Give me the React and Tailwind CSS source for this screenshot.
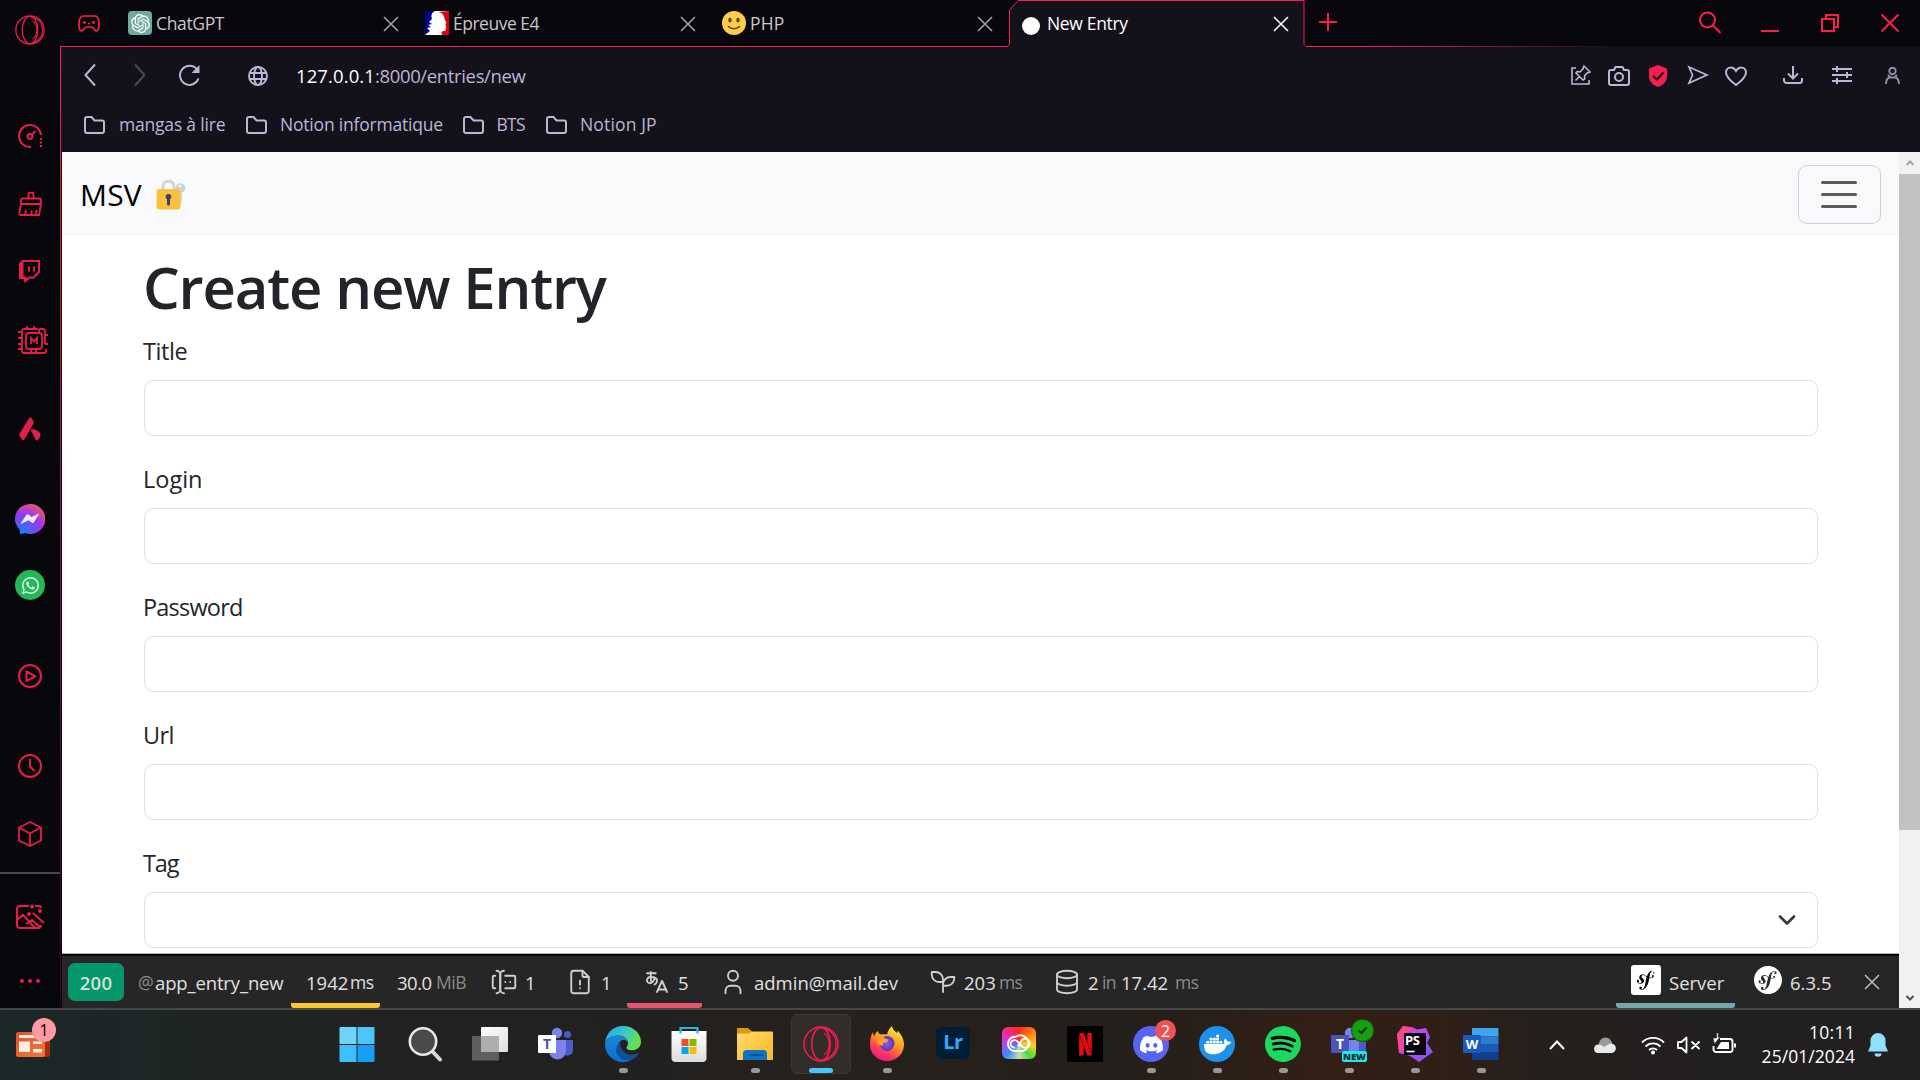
import React from "react";
import {
  SiSymfony, SiOpenai, SiNetflix, SiDiscord, SiDocker, SiSpotify, SiWhatsapp,
} from "react-icons/si";
import { TbForms, TbFileAlert, TbLanguageHiragana, TbUser, TbDatabase } from "react-icons/tb";

/* ---------- shared ---------- */

function Svg({ w, h, vb, className = "", sw = 2, children }) {
  return (
    <svg width={w} height={h} viewBox={vb || `0 0 ${w} ${h}`} fill="none" stroke="currentColor" strokeWidth={sw} className={`block shrink-0 overflow-visible ${className}`}>
      {children}
    </svg>
  );
}

const Close = ({ className = "" }) => (
  <Svg w={16} h={16} sw={1.5} className={className}><path d="M1 1l14 14M15 1L1 15" /></Svg>
);

const OperaRings = ({ size }) => (
  <Svg w={size} h={size} vb="0 0 36 36" sw={1.6}>
    <circle cx="18" cy="18" r="17" />
    <ellipse cx="18" cy="18" rx="9.3" ry="16.4" />
    <path d="M19 2C28 4 33 10 33 18s-5 14-14 16M21 7c7 5 7 17 0 22" strokeWidth="1.3" />
  </Svg>
);

/* ---------- left sidebar ---------- */

function Sidebar() {
  return (
    <aside className="flex w-[60px] shrink-0 flex-col items-center bg-[#08070c] text-[#e51d4b]">
      <div className="mt-[15px]"><OperaRings size={30} /></div>
      <div className="mt-[79px]">
        <Svg w={24} h={24}>
          <path d="M13 23A11 11 0 1 1 23 11" />
          <circle cx="12" cy="12.5" r="2.4" /><path d="M13.8 10.8L17.5 7" />
          <path d="M23 14v9" strokeDasharray="2 1.5" />
        </Svg>
      </div>
      <div className="mt-[44px]">
        <Svg w={24} h={24} sw={1.8}>
          <path d="M10.5 6V1.5a.7.7 0 0 1 .7-.7h3.6a.7.7 0 0 1 .7.7V6M4 6.5h17.5a1.5 1.5 0 0 1 1.5 1.5v4H3V8a1.5 1.5 0 0 1 1-1.5zM3 12L1.2 21.5a1.2 1.2 0 0 0 1.2 1.5H21l2-11M7 23l1-5M13.5 23v-4.5M18 23l.5-5" />
        </Svg>
      </div>
      <div className="mt-[44px]">
        <Svg w={22} h={22}>
          <path d="M3.5 1H20v11l-5.500 5.500h-4L6.500 21v-3.500h-3z" />
          <path d="M0 3l4-2.500V18h3v3.500H5V19H0z" fill="currentColor" stroke="none" />
          <path d="M10 6.500v5M15 6.500v5" />
        </Svg>
      </div>
      <div className="mt-[43px] pl-[5px]">
        <Svg w={30} h={30} sw={1.8}>
          <path d="M20 4H6a2 2 0 0 0-2 2v20a2 2 0 0 0 2 2h20a2 2 0 0 0 2-2v-2M21 4h4a2 2 0 0 1 2 2v13" />
          <rect x="8" y="8" width="16" height="16" rx="3" />
          <path d="M9 1v3M16 1v3M0 7h4M0 13h4M0 19h4M0 24h4M27 10h3M27 19h3M13 24v4M18 24v4M21 4v4" />
          <path d="M13 19v-6l3 3.500 3-3.500v6" />
        </Svg>
      </div>
      <div className="mt-[62px]">
        <svg width="22" height="24" viewBox="0 0 22 24" fill="currentColor" className="block">
          <path d="M10 1.500c.6-1.200 2-1.200 2.700-.2l1.800 3c.5.8.4 1.500 0 2.200L5.500 22.300c-.7 1.200-2 1.200-2.700 0L.6 19c-.5-.8-.4-1.500 0-2.200z" />
          <path d="M11.500 12.500c4-1.200 10 1.500 10 5.800 0 2-1.500 3.200-2.700 4.600-.7.8-1.600.7-2.200-.2z" />
        </svg>
      </div>
      <div className="mt-[63px]">
        <svg width="30" height="30" viewBox="0 0 30 30" className="block">
          <defs><radialGradient id="msg" cx=".2" cy="1" r="1.15"><stop offset="0" stopColor="#1184f5" /><stop offset=".6" stopColor="#9a36f0" /><stop offset=".95" stopColor="#f0566c" /></radialGradient></defs>
          <path d="M15 0a15 15 0 1 1-5 29L6 30c-.8.200-1-.1-1-.8L4.800 26A15 15 0 0 1 15 0z" fill="url(#msg)" />
          <path d="M6 19l5.200-8c.6-.8 1.500-.9 2.200-.4l3 2.400 7-3.200c.5-.1.800.3.5.8l-5 7.600c-.6.8-1.500.9-2.200.4l-3.200-2.400-6.600 3.400c-.7.3-1.200-.1-.9-.6z" fill="#eeeaf2" />
        </svg>
      </div>
      <div className="mt-[36px] flex h-[30px] w-[30px] items-center justify-center rounded-full bg-[#22b858]">
        <SiWhatsapp className="h-[17px] w-[17px] text-[#f0f5f0]" />
      </div>
      <div className="mt-[64px]">
        <Svg w={24} h={24}><circle cx="12" cy="12" r="11" /><path d="M8.500 7.500v9.400l9-4.600z" strokeLinejoin="round" /></Svg>
      </div>
      <div className="mt-[66px]">
        <Svg w={24} h={24}><circle cx="12" cy="12" r="11" /><path d="M12 5v7.500l4.500 4.500" /></Svg>
      </div>
      <div className="mt-[43px]">
        <Svg w={24} h={26} sw={1.8}><path d="M12 1l11 5.500v13L12 25 1 19.500v-13zM1 6.500L12 12.500l11-6M12 12.500V25" strokeLinejoin="round" /></Svg>
      </div>
      <div className="mt-[25px] h-[2px] w-[60px] bg-[#4a4a4d]" />
      <div className="mt-[30px]">
        <Svg w={28} h={26}>
          <path d="M13 2H4a3 3 0 0 0-3 3v16a3 3 0 0 0 3 3h18a3 3 0 0 0 3-3M19 2h4a2 2 0 0 1 2 2M1 16l6-5 12 13M10 20l6-4 8 7M17 9l11 10" />
          <g fill="currentColor" stroke="none"><circle cx="16" cy="2.500" r="2" /><circle cx="24" cy="7" r="2" /><circle cx="13" cy="10" r="2" /></g>
        </Svg>
      </div>
      <div className="mt-[49px] flex gap-1">
        <i className="h-1 w-1 rounded-full bg-current" /><i className="h-1 w-1 rounded-full bg-current" /><i className="h-1 w-1 rounded-full bg-current" />
      </div>
    </aside>
  );
}

/* ---------- tab strip ---------- */

const Marianne = () => (
  <svg width="24" height="24" viewBox="0 0 24 24" className="block">
    <path d="M0 0h24v24H0z" fill="#fff" />
    <path d="M0 0h10C6 2 6 5 7 8l-3 3 3 2-4 1 3 2-4 1 3 3-5 4z" fill="#000091" />
    <path d="M24 0v24h-7c-1-3 0-4 2-4s2-2 1.500-3l1-1-1-1 .500-1-1-1 1.500-1-2-4c0-3-2-6-6-7z" fill="#e1000f" />
  </svg>
);
const Smiley = () => (
  <svg width="24" height="24" viewBox="0 0 24 24" className="block">
    <circle cx="12" cy="12" r="12" fill="#ffcc4d" />
    <ellipse cx="8" cy="9" rx="1.700" ry="2.500" fill="#664500" /><ellipse cx="16" cy="9" rx="1.700" ry="2.500" fill="#664500" />
    <path d="M6.500 15.500c3 3 8 3 11 0" stroke="#664500" strokeWidth="1.500" fill="none" strokeLinecap="round" />
  </svg>
);

function Tab({ icon, label, active }) {
  return (
    <div className="flex h-[46px] w-[297px] shrink-0 items-center">
      <div className="w-6 shrink-0">{icon}</div>
      <div className={`ml-[4px] whitespace-nowrap text-[17.5px] leading-[46px] ${active ? "w-[226px] text-white" : "w-[227px] text-[#c9c7cb]"}`}>{label}</div>
      <Close className={active ? "mt-[2px] text-white" : "mt-[2px] text-[#a9a7ab]"} />
    </div>
  );
}

function TabStrip() {
  return (
    <div className="flex h-[46px] bg-[#08070c] pl-[18px] text-[#fa1e4e]">
      <div className="flex h-[46px] w-[50px] shrink-0 items-center">
        <Svg w={22} h={17} sw={1.7}>
          <path d="M5 1h12c3 0 4 4 4 8 0 4-.5 7-2.500 7-2 0-2.500-4-5-4h-5c-2.500 0-3 4-5 4S1 13 1 9c0-4 1-8 4-8z" />
          <g fill="currentColor" stroke="none"><circle cx="6.500" cy="7.500" r="1.400" /><circle cx="15.500" cy="7.500" r="1.400" /><circle cx="11" cy="8.500" r="1" /></g>
        </Svg>
      </div>
      <Tab
        icon={<div className="flex h-6 w-6 items-center justify-center rounded-[4px] bg-[#74aa9c]"><SiOpenai className="h-[19px] w-[19px] text-white" /></div>}
        label={<span className="tracking-[-0.35px]">ChatGPT</span>}
      />
      <Tab icon={<Marianne />} label={<span className="tracking-[-0.5px]">Épreuve E4</span>} />
      <Tab icon={<Smiley />} label={<span className="tracking-[0.1px]">PHP</span>} />
      <div className="relative z-10 flex w-[300px] shrink-0">
        <Tab active icon={<div className="ml-[3px] mt-[6px] h-[18px] w-[18px] rounded-full bg-white" />} label={<span className="tracking-[-0.33px]">New Entry</span>} />
      </div>
      <Svg w={18} h={18} className="mt-[13px]"><path d="M9 0v18M0 9h18" /></Svg>
      <div className="ml-auto flex pr-[21px]">
        <Svg w={22} h={22} className="mt-[11px]"><circle cx="8.500" cy="9" r="7.500" /><path d="M14 14.500l7.500 7.500" /></Svg>
        <Svg w={18} h={18} className="ml-[40px] mt-[14px]"><path d="M0 17h18" /></Svg>
        <Svg w={18} h={18} className="ml-[42px] mt-[14px]"><path d="M1 5h12v12H1zM5 5V1h12v12h-4" /></Svg>
        <Svg w={18} h={18} className="ml-[42px] mt-[14px]"><path d="M.5 .5l17 17M17.500 .5l-17 17" /></Svg>
      </div>
    </div>
  );
}

/* ---------- address + bookmarks ---------- */

function AddressBar() {
  return (
    <div className="flex h-[58px] items-center pl-[24px] pr-[20px] text-[#bfb5d6]">
      <Svg w={12} h={22}><path d="M11 .5L1.500 11 11 21.500" /></Svg>
      <Svg w={12} h={22} className="ml-[38px] text-[#4b4853]"><path d="M1 .5L10.500 11 1 21.500" /></Svg>
      <Svg w={22} h={22} className="ml-[33px]"><path d="M19.500 14.500A9.500 9.500 0 1 1 18 5.500" /><path d="M20.500 1v8h-8z" fill="currentColor" stroke="none" /></Svg>
      <Svg w={20} h={20} className="ml-[47px] mt-[2px]" sw={1.9}>
        <circle cx="10" cy="10" r="9" /><ellipse cx="10" cy="10" rx="4" ry="9" /><path d="M1.500 7h17M1.500 13h17" />
      </Svg>
      <div className="ml-[28px] whitespace-nowrap pt-[2px] text-[18.5px]">
        <span className="tracking-[0.1px] text-white">127.0.0.1</span><span className="tracking-[-0.35px]">:8000/entries/new</span>
      </div>
      <div className="ml-auto flex items-center">
        <Svg w={20} h={20} sw={1.6}>
          <path d="M5 3H1v16h17v-4" /><path d="M13 1l6 6-1.500.8-1 0-3 3 .3 3-1.800 1.200-7-7L6.200 6.500l3 .2 3-3v-1.200zM8.500 11.500L4.500 15.500" />
        </Svg>
        <Svg w={22} h={20} className="ml-[17px] mt-[2px]"><path d="M3 4h3l1.500-3h7L16 4h3a2 2 0 0 1 2 2v11a2 2 0 0 1-2 2H3a2 2 0 0 1-2-2V6a2 2 0 0 1 2-2z" /><circle cx="11" cy="11" r="4" /></Svg>
        <Svg w={18} h={22} className="ml-[19px] mt-[2px]">
          <path d="M9 0l9 3.500V11c0 6-4 9-9 11-5-2-9-5-9-11V3.500z" fill="#fa1e4e" stroke="none" /><path d="M4 11l4 3.500 6.500-7" stroke="#13111a" />
        </Svg>
        <Svg w={20} h={18} className="ml-[21px]" sw={1.7}><path d="M1 1l18 8-18 8 3.500-8z" /></Svg>
        <Svg w={22} h={20} className="ml-[17px] mt-[2px]"><path d="M11 19C5 14.500 1 11 1 6.500 1 1 8 -.5 11 5c3-5.500 10-4 10 1.500 0 4.500-4 8-10 12.500z" /></Svg>
        <Svg w={20} h={18} className="ml-[36px]"><path d="M10 0v12M5 7.500l5 5 5-5M1 12v2.500A2.500 2.500 0 0 0 3.500 17h13a2.500 2.500 0 0 0 2.500-2.500V12" /></Svg>
        <Svg w={20} h={18} className="ml-[29px]"><path d="M0 3h20M0 9h20M0 15h20M5 0v6M15 6v6M5 12v6" /></Svg>
        <Svg w={15} h={17} className="ml-[33px] opacity-75" sw={1.9}><circle cx="7.500" cy="4" r="3.200" /><path d="M1 17c0-4 2-6 3.500-6.500h6c1.500.5 3.500 2.500 3.500 6.500M5 10l-2-2M10 10l2-2" /></Svg>
      </div>
    </div>
  );
}

const Folder = () => (
  <Svg w={21} h={18}><path d="M1 3a2 2 0 0 1 2-2h4.500l3 3.500H18a2 2 0 0 1 2 2V15a2 2 0 0 1-2 2H3a2 2 0 0 1-2-2z" /></Svg>
);

function Bookmarks() {
  return (
    <div className="flex h-[48px] items-start pl-[24px] pt-[8px] text-[17.5px] leading-[25px] text-[#bfb5d6]">
      <div className="flex w-[162px] items-center gap-[14px] whitespace-nowrap"><Folder /><span className="tracking-[-0.2px]">mangas à lire</span></div>
      <div className="flex w-[216.5px] items-center gap-[13px] whitespace-nowrap"><Folder /><span className="tracking-[-0.2px]">Notion informatique</span></div>
      <div className="flex w-[83.5px] items-center gap-[13px] whitespace-nowrap"><Folder /><span className="tracking-[-0.7px]">BTS</span></div>
      <div className="flex items-center gap-[13px] whitespace-nowrap"><Folder /><span className="tracking-[0.15px]">Notion JP</span></div>
    </div>
  );
}

/* ---------- page ---------- */

const Lock = () => (
  <svg width="30" height="31" viewBox="0 0 30 31" className="block">
    <path d="M7 13V7.500a5.500 5.500 0 0 1 11 0V13" fill="none" stroke="#d3d3d3" strokeWidth="3" />
    <circle cx="24.500" cy="9" r="4.800" fill="#cfcfd0" /><circle cx="24" cy="7" r="1.300" fill="#f8f9fa" />
    <path d="M23 12h3v12l-3 1z" fill="#d8d8d8" />
    <rect x=".5" y="10" width="24" height="20.500" rx="3" fill="#f9c23c" />
    <path d="M12.500 15a2.800 2.800 0 0 1 1.500 5.200V25a1.500 1.500 0 0 1-3 0v-4.800A2.800 2.800 0 0 1 12.500 15z" fill="#433b6b" />
  </svg>
);

function Field({ label, select }) {
  return (
    <div className="mb-[28px] w-[1674px]">
      <label className="-ml-px flex h-[44px] items-start text-[23.5px] leading-[30px] text-[#212529]">{label}</label>
      <div className="flex h-[56px] items-center justify-end rounded-[9px] border border-[#dee2e6] bg-white pr-[21px]">
        {select && <Svg w={18} h={10} className="text-[#343a40]" sw={2.6}><path d="M2 1.500l7 7 7-7" strokeLinecap="round" strokeLinejoin="round" /></Svg>}
      </div>
    </div>
  );
}

function Page() {
  return (
    <div className="flex h-[801px] flex-col overflow-hidden bg-white">
      <nav className="flex h-[84px] shrink-0 items-center bg-[#f8f9fb] pl-[18px] pr-[18px]">
        <span className="pt-[1px] text-[30px] tracking-[0.2px] text-black">MSV</span>
        <span className="ml-[14px]"><Lock /></span>
        <div className="ml-auto flex h-[59px] w-[83px] items-center justify-center rounded-[9px] border border-[#d0d1d4] pr-[1px]">
          <div className="flex w-[36px] flex-col gap-[9px]">
            <i className="h-[3px] rounded-full bg-[#5b5c5e]" /><i className="h-[3px] rounded-full bg-[#5b5c5e]" /><i className="h-[3px] rounded-full bg-[#5b5c5e]" />
          </div>
        </div>
      </nav>
      <div className="pl-[82px]">
        <h1 className="-ml-px h-[100px] pt-[15px] text-[58px] font-semibold leading-[72px] tracking-[-1.15px] text-[#212529]">Create new Entry</h1>
        <Field label={<span className="tracking-[-0.4px]">Title</span>} />
        <Field label={<span className="tracking-[0px]">Login</span>} />
        <Field label={<span className="tracking-[-0.8px]">Password</span>} />
        <Field label={<span className="tracking-[-0.6px]">Url</span>} />
        <Field label={<span className="tracking-[-1.1px]">Tag</span>} select />
      </div>
    </div>
  );
}

/* ---------- profiler bar ---------- */

function DebugBar() {
  return (
    <div className="flex h-[55px] items-stretch border-t border-[#a6acaa] bg-[#262626] text-[18.5px] font-medium text-[#e0e0e0] shadow-[inset_0_2px_0_#050505]">
      <div className="flex grow items-center whitespace-nowrap pt-[2px] *:h-full [&_span]:pt-[1px]">
        <div className="flex w-[76px] items-center pl-[6px]">
          <span className="flex h-[38px] w-[56px] items-center justify-center rounded-[7px] bg-[#059669] font-semibold tracking-[0.2px] text-[#cfe3db]">200</span>
        </div>
        <div className="flex w-[153px] items-center">
          <span className="w-[17px] text-[17.5px] font-normal text-[#8c8c8c]">@</span><span className="tracking-[-0.14px]">app_entry_new</span>
        </div>
        <div className="flex w-[89px] items-center rounded-b-[3px] border-b-[5px] border-[#fcc728] pl-[15px] pt-[5px]">
          <span className="w-[44px]">1942</span><span className="text-[17.5px] tracking-[-0.4px]">ms</span>
        </div>
        <div className="flex w-[94px] items-center pl-[17px]">
          <span className="w-[39px] tracking-[-0.5px]">30.0</span><span className="text-[17.5px] font-normal tracking-[-0.5px] text-[#8c8c8c]">MiB</span>
        </div>
        <div className="flex w-[78px] items-center pl-[15px]">
          <TbForms className="h-[30px] w-[30px] [stroke-width:1.5] text-[#cfcfcf]" /><span className="ml-[6px]">1</span>
        </div>
        <div className="flex w-[75px] items-center pl-[13px]">
          <TbFileAlert className="h-[30px] w-[30px] [stroke-width:1.5] text-[#cfcfcf]" /><span className="ml-[6px]">1</span>
        </div>
        <div className="flex w-[75px] items-center rounded-b-[3px] border-b-[5px] border-[#e8536f] pl-[15px] pt-[5px]">
          <TbLanguageHiragana className="h-[30px] w-[30px] [stroke-width:1.5] text-[#cfcfcf]" /><span className="ml-[6px]">5</span>
        </div>
        <div className="flex w-[226px] items-center pl-[16px]">
          <TbUser className="h-[30px] w-[30px] [stroke-width:1.5] text-[#cfcfcf]" /><span className="ml-[6px]">admin@mail.dev</span>
        </div>
        <div className="flex w-[124px] items-center">
          <Svg w={30} h={30} vb="0 0 24 24" sw={1.5} className="text-[#cfcfcf]">
            <path d="M12 10a6 6 0 0 0-6-6H3v2a6 6 0 0 0 6 6h3M12 14a6 6 0 0 1 6-6h3v1a6 6 0 0 1-6 6h-3M12 20V10" strokeLinejoin="round" strokeLinecap="round" />
          </Svg>
          <span className="ml-[6px] w-[35px]">203</span><span className="text-[17.5px] font-normal tracking-[-0.6px] text-[#8c8c8c]">ms</span>
        </div>
        <div className="flex items-center">
          <TbDatabase className="h-[30px] w-[30px] [stroke-width:1.5] text-[#cfcfcf]" />
          <span className="ml-[6px] w-[14px]">2</span><span className="w-[19px] text-[17.5px] font-normal tracking-[-0.6px] text-[#8c8c8c]">in</span>
          <span className="w-[54px]">17.42</span><span className="text-[17.5px] font-normal tracking-[-0.4px] text-[#8c8c8c]">ms</span>
        </div>
        <div className="ml-auto flex w-[119px] items-center rounded-b-[3px] border-b-[5px] border-[#75a6a9] pl-[15px] font-normal">
          <div className="flex h-[30px] w-[30px] items-center justify-center rounded-[3px] bg-white">
            <div className="flex h-[22px] w-[22px] items-center justify-center rounded-full bg-black"><SiSymfony className="h-[29px] w-[29px] shrink-0 text-white" /></div>
          </div>
          <div className="ml-[8px] pt-[6px]">Server</div>
        </div>
        <div className="flex w-[164px] items-center pl-[19px] font-normal">
          <SiSymfony className="mb-[5px] h-[28px] w-[28px] text-white" /><span className="ml-[8px]">6.3.5</span>
          <Close className="ml-auto mr-[19px] text-[#bdbdbd]" />
        </div>
      </div>
    </div>
  );
}

function ScrollBar() {
  return (
    <div className="flex w-[21px] shrink-0 flex-col items-center bg-[#f1f1f1]">
      <div className="flex h-[22px] items-center"><Svg w={8} h={6} className="text-[#a3a3a3]"><path d="M.5 5L4 1.500 7.500 5" /></Svg></div>
      <div className="h-[656px] w-full bg-[#c1c1c1]" />
      <div className="mt-auto flex h-[20px] items-center"><Svg w={8} h={6} className="text-[#505050]"><path d="M.5 1L4 4.500 7.500 1" /></Svg></div>
    </div>
  );
}

/* ---------- taskbar ---------- */

const Ic = ({ children }) => <svg width="36" height="36" viewBox="0 0 36 36" className="block overflow-visible">{children}</svg>;

const Start = () => (
  <Ic>
    <path d="M.5 2a1 1 0 0 1 1-1h16v17H.500z" fill="#6fd3fa" /><path d="M18.500 1h16a1 1 0 0 1 1 1v16h-17z" fill="#4dc5fa" />
    <path d="M.5 19h17v17h-16a1 1 0 0 1-1-1z" fill="#3dbffb" /><path d="M18.500 19h17v16a1 1 0 0 1-1 1h-16z" fill="#159ff6" />
  </Ic>
);
const Search = () => (
  <Ic>
    <path d="M26 25l8 8.500" stroke="#d5d8da" strokeWidth="4" strokeLinecap="round" />
    <circle cx="17" cy="15.500" r="13.200" fill="#4a4a49" stroke="#e6e8ea" strokeWidth="2.600" />
  </Ic>
);
const TaskView = () => (
  <Ic>
    <defs><linearGradient id="tv" x2="1" y2="1"><stop offset="0" stopColor="#fff" /><stop offset="1" stopColor="#dedede" /></linearGradient></defs>
    <rect x="9" y="1" width="27" height="25" rx="1" fill="url(#tv)" /><rect y="10" width="27" height="24.500" rx="1" fill="#5f5f5f" /><rect x="9" y="10" width="18" height="16" fill="#aeaeae" />
  </Ic>
);
const Teams = ({ isNew }) => (
  <div className="relative h-9 w-9">
    <Ic>
      <circle cx="19" cy="7" r="5.200" fill="#7b83eb" /><circle cx="29.500" cy="8.500" r="3.500" fill="#5059c9" />
      <path d="M25 14h10v10a5.500 5.500 0 0 1-8 5z" fill="#5059c9" /><path d="M11 14h17v11a8.500 8.500 0 0 1-17 0z" fill="#7b83eb" />
      <rect y="9" width="18" height="18" rx="1" fill={isNew ? "#4b53bc" : "#fff"} />
    </Ic>
    <span className={`absolute left-0 top-[9px] w-[18px] text-center text-[14px] font-bold leading-[18px] ${isNew ? "text-white" : "text-[#4b53bc]"}`}>T</span>
    {isNew && (
      <>
        <span className="absolute left-[11px] top-[25px] flex h-[11px] w-[25px] items-center justify-center rounded-[2px] bg-[#22e6ea] text-[9.5px] font-extrabold leading-none text-[#0a2a2c]">NEW</span>
        <span className="absolute left-[21px] top-[-6px] flex h-[21px] w-[21px] items-center justify-center rounded-full bg-[#13a10e] ring-1 ring-[#1f5d1b]">
          <Svg w={9} h={7} className="text-[#1b2f14]"><path d="M.5 3.500L3.500 6l5-5.500" /></Svg>
        </span>
      </>
    )}
  </div>
);
const Edge = () => (
  <Ic>
    <defs>
      <linearGradient id="e1" x2="1" y2=".4"><stop offset="0" stopColor="#2b9de6" /><stop offset=".5" stopColor="#36c3d3" /><stop offset="1" stopColor="#66e04f" /></linearGradient>
      <linearGradient id="e2" x2="0" y2="1"><stop offset="0" stopColor="#1b86d9" /><stop offset="1" stopColor="#0a6fce" /></linearGradient>
    </defs>
    <path d="M0 17C1 7 8 0 18 0c11 0 18 8 18 15.500 0 6-4.500 8.800-9 8.800-4 0-5.500-1.500-5.500-2.800 0-1 1.500-1.800 1.500-4.500 0-3.500-4-7.500-9-7.500C6 9.500 1 13 0 17z" fill="url(#e1)" />
    <path d="M0 17c1.500-4.500 6-7.500 12.500-7.500 6.500 0 10.500 4 10.500 7.500-1-2.500-3-3-4.500-3-5 0-8 8-4 14 2.500 4 7 6.500 12 6A18 18 0 0 1 0 17z" fill="url(#e2)" />
    <path d="M15 16c-5 4-5 11-1 14.500 5 5 12 4 15 2 2-1 3.500-3 4.200-4.500.5-1-.4-1.300-1.200-.8-6 3-12 1-14.500-3-2-3-2.500-6-2.500-8.200z" fill="#11509c" />
  </Ic>
);
const Store = () => (
  <Ic>
    <defs><linearGradient id="st" x2="0" y2="1"><stop offset="0" stopColor="#fff" /><stop offset="1" stopColor="#dcdcdc" /></linearGradient></defs>
    <path d="M.5 5h35v27a4 4 0 0 1-4 4h-27a4 4 0 0 1-4-4z" fill="url(#st)" /><path d="M9.500 7.500V2h17v5.500" fill="none" stroke="#27b5f2" strokeWidth="2.200" />
    <path d="M10.500 13h7v7h-7z" fill="#f25022" /><path d="M18.500 13h7v7h-7z" fill="#7fba00" /><path d="M10.500 21h7v7h-7z" fill="#00a4ef" /><path d="M18.500 21h7v7h-7z" fill="#ffb900" />
  </Ic>
);
const Explorer = () => (
  <Ic>
    <defs><linearGradient id="ex" x2="1" y2="1"><stop offset="0" stopColor="#ffdb70" /><stop offset="1" stopColor="#f8b81c" /></linearGradient></defs>
    <path d="M0 3a1 1 0 0 1 1-1h10l4 3.500V9H0z" fill="#dc9a08" /><path d="M0 7.500h12l3-2h20a1 1 0 0 1 1 1V34H0z" fill="url(#ex)" />
    <path d="M6 34v-6.500a3.500 3.500 0 0 1 3.500-3.500h17a3.500 3.500 0 0 1 3.500 3.500V34z" fill="#0f74c6" /><path d="M11 29h14" stroke="#0b4a86" strokeWidth="1.600" strokeLinecap="round" />
  </Ic>
);
const Firefox = () => (
  <Ic>
    <defs>
      <linearGradient id="ff" x1=".8" y1="0" x2=".3" y2="1"><stop offset="0" stopColor="#ffef47" /><stop offset=".45" stopColor="#ff9a1f" /><stop offset=".75" stopColor="#ff3c5a" /><stop offset="1" stopColor="#e3168c" /></linearGradient>
      <radialGradient id="fg"><stop offset="0" stopColor="#8f57f0" /><stop offset="1" stopColor="#5a38b8" /></radialGradient>
    </defs>
    <path d="M4 6c0 2 .5 3 1.500 4C6 7.500 7.500 6 9 5c0 2 1 3 3 3.500 1-.5 5-.5 6 0C19 5 20.500 2 23 0c.5 3 2 4.500 5 7 .5-1 .5-1.500.500-2.500C32 8 35 13 35 18.500 35 28 27.500 35 18 35S1 28 1 18.500C1 13 2 9 4 6z" fill="url(#ff)" />
    <circle cx="18" cy="17.500" r="7.500" fill="url(#fg)" /><path d="M8 12c4-2 7-1 9 1 3 0 3 2.500 0 3.500-3 0-4 2-2.500 3.500C9 20 7 16 8 12z" fill="#ff9d2a" />
  </Ic>
);
const Lightroom = () => (
  <div className="mb-[3px] flex h-[32px] w-[34px] items-center justify-center rounded-[6px] bg-[#001e36] pb-[2px] text-[20px] font-bold leading-none tracking-[-0.5px] text-[#31a8ff]">Lr</div>
);
const CreativeCloud = () => (
  <div className="mb-[3px] flex h-[32px] w-[34px] items-center justify-center rounded-[6px] bg-[conic-gradient(from_0deg,#ff2a1a,#ff7a10_50deg,#ffd21f_100deg,#4dd840_140deg,#c9e0b0_180deg,#3f8ef5_225deg,#a74bf0_265deg,#f02ab0_300deg,#ff2a1a)]">
    <Svg w={26} h={19} className="text-white">
      <path d="M8.500 18A7.200 7.200 0 0 1 7 4a10 10 0 0 1 3-.2A8 8 0 1 1 17 18z" /><path d="M4.500 11a4 4 0 0 1 7-2.500l6 6M12 13l4-6a4.500 4.500 0 1 1 2 7.500c-2 0-3-1-5-3.500M9 14.500a4 4 0 0 1-4.500-3.500" strokeWidth="1.800" />
    </Svg>
  </div>
);
const Netflix = () => (
  <div className="flex h-9 w-9 items-center justify-center bg-black"><SiNetflix className="h-[23px] w-[23px] text-[#e50914]" /></div>
);
const Discord = () => (
  <div className="relative flex h-9 w-9 items-center justify-center rounded-full bg-[#5865f2]">
    <SiDiscord className="mt-[1px] h-[23px] w-[23px] text-white" />
    <span className="absolute left-[22px] top-[-6px] flex h-[21px] w-[21px] items-center justify-center rounded-full bg-[#f05357] text-[16px] leading-none text-white">2</span>
  </div>
);
const Docker = () => (
  <div className="flex h-9 w-9 items-center justify-center rounded-full bg-[#1d91eb]"><SiDocker className="h-[27px] w-[27px] text-white" /></div>
);
const Spotify = () => (
  <div className="flex h-9 w-9 items-center justify-center rounded-full bg-black"><SiSpotify className="h-9 w-9 text-[#1ed760]" /></div>
);
const PhpStorm = () => (
  <div className="relative h-9 w-9">
    <Ic>
      <defs><linearGradient id="ps" x2="1" y2="1"><stop offset="0" stopColor="#ff318c" /><stop offset=".45" stopColor="#b74af7" /><stop offset="1" stopColor="#765af8" /></linearGradient></defs>
      <path d="M6 0l10 1.500 4 2L29 2l4 9-3 6 6 9-14 10-9-6-11-3L0 8z" fill="url(#ps)" /><path d="M6 0l10 1.500L7 10v14L2 27 0 8z" fill="#ff4a86" opacity=".8" />
      <path d="M7 7h22v22H7z" fill="#0b0510" /><path d="M9.500 25.500h8" stroke="#fff" strokeWidth="1.600" />
    </Ic>
    <span className="absolute left-[8px] top-[7px] text-[13px] font-bold leading-[15px] tracking-[-0.5px] text-white">PS</span>
  </div>
);
const Word = () => (
  <div className="relative h-9 w-9">
    <Ic>
      <path d="M9 3a1 1 0 0 1 1-1h24.500a1 1 0 0 1 1 1v7.500H9z" fill="#41a5ee" /><path d="M9 10.500h26.500v8H9z" fill="#2b7cd3" /><path d="M9 18.500h26.500v8H9z" fill="#185abd" /><path d="M9 26.500h26.500V33a1 1 0 0 1-1 1H10a1 1 0 0 1-1-1z" fill="#103f91" />
      <rect y="9" width="18" height="18" rx="1" fill="#185abd" />
    </Ic>
    <span className="absolute left-0 top-[9px] w-[18px] text-center text-[13px] font-bold leading-[18px] text-white">W</span>
  </div>
);
const Opera = () => <div className="text-[#ee1c4c]"><OperaRings size={36} /></div>;
const TeamsNew = () => <Teams isNew />;

/* state: 1 = running, 2 = focused */
const apps = [
  [Start], [Search], [TaskView], [Teams], [Edge, 1], [Store], [Explorer, 1], [Opera, 2], [Firefox, 1],
  [Lightroom], [CreativeCloud], [Netflix], [Discord, 1], [Docker, 1], [Spotify, 1], [TeamsNew, 1], [PhpStorm, 1], [Word, 1],
];

function Taskbar() {
  return (
    <div className="flex h-[72px] border-t-2 border-[#454645] bg-[linear-gradient(90deg,#1b2729_0px,#1f2423_240px,#222120_600px,#26211c_900px,#241f1b_1120px,#321f16_1320px,#2f1f17_1440px,#23201e_1560px,#212020_1920px)]">
      <div className="w-[324px] pl-4 pt-[22px]">
        <div className="relative h-[25px] w-[34px]">
          <svg width="34" height="25" viewBox="0 0 34 25" className="block">
            <defs><linearGradient id="nw" x2="1" y2="1"><stop offset="0" stopColor="#e8502c" /><stop offset="1" stopColor="#f07838" /></linearGradient></defs>
            <rect width="34" height="25" rx="2.500" fill="#a22c12" /><rect width="29" height="25" rx="2.500" fill="url(#nw)" />
            <path d="M3 3h16v3H3zM3 9.500h11V20H3zM17 9.500h9V12h-9zM17 17h9v3.500h-9z" fill="#fdeee6" />
          </svg>
          <span className="absolute left-[16px] top-[-14px] flex h-6 w-6 items-center justify-center rounded-full bg-[#ff99a4] text-[16px] leading-none text-black">1</span>
        </div>
      </div>
      {apps.map(([Icon, state], i) => (
        <div key={i} className={`flex w-[66px] shrink-0 justify-center pt-1 ${i === 1 || i === 4 ? "ml-px" : ""}`}>
          <div className={`flex h-[60px] w-[60px] flex-col items-center rounded-[6px] border pt-[11px] ${state === 2 ? "border-[#3d3a36] bg-[#302d2a]" : "border-transparent"}`}>
            <div className="flex h-9 w-9 items-center justify-center">
              <Icon />
            </div>
            {state === 1 && <i className="mt-[6px] h-[5px] w-[9px] rounded-full bg-[#9a9896]" />}
            {state === 2 && <i className="mt-[6px] h-[5px] w-[24px] rounded-full bg-[#4cc2ff]" />}
          </div>
        </div>
      ))}
      <div className="ml-auto flex items-center pr-[32px] text-white">
        <Svg w={16} h={10}><path d="M1 9l7-7.500L15 9" /></Svg>
        <svg width="24" height="18" viewBox="0 0 24 18" className="ml-[28px] block">
          <path d="M6 8a6.500 6.500 0 0 1 13 0v4H6z" fill="#9b9b9b" /><path d="M4.500 17A4.300 4.300 0 0 1 5 8.500c2 0 3.500.5 6 2.500l6-3.500A4.800 4.800 0 0 1 19 17z" fill="#e9e9e9" />
        </svg>
        <Svg w={24} h={20} className="ml-[24px]" sw={1.9}><path d="M1 7.500a15.500 15.500 0 0 1 22 0M4.500 11.500a10.500 10.500 0 0 1 15 0M8 15a6 6 0 0 1 8 0" /><circle cx="12" cy="17.500" r="2" fill="currentColor" stroke="none" /></Svg>
        <Svg w={23} h={18} className="ml-[12px]" sw={1.8}><path d="M1 6h3.500l5-4.500v15l-5-4.500H1zM14.500 5.500l8 7.500M22.500 5.500l-8 7.500" strokeLinejoin="round" /></Svg>
        <Svg w={24} h={20} className="mb-[3px] ml-[12px]" sw={1.9}>
          <path d="M8 5h10a2.500 2.500 0 0 1 2.500 2.500v8A2.500 2.500 0 0 1 18 18H4a2.500 2.500 0 0 1-2.500-2.500V12M23 9.500v4" /><path d="M9 8h8v7H4.500z" fill="currentColor" stroke="none" /><path d="M4.500-1v5H1l1.500 6L8 3H6l.5-4z" fill="currentColor" stroke="#23201e" strokeWidth=".6" />
        </Svg>
        <div className="mb-[3px] ml-[26px] flex flex-col items-end text-[17.5px] leading-[24px]">
          <span className="tracking-[0.3px]">10:11</span><span className="tracking-[0.05px]">25/01/2024</span>
        </div>
        <svg width="20" height="24" viewBox="0 0 20 24" fill="#8fe0fb" className="ml-[13px] block">
          <path d="M10 0a7.500 7.500 0 0 1 7.500 7.500v5L20 18.500H0l2.500-6v-5A7.500 7.500 0 0 1 10 0zM6.500 20.500h7a3.500 3.300 0 0 1-7 0z" />
        </svg>
      </div>
    </div>
  );
}

/* ---------- app ---------- */

export default function App() {
  return (
    <div className="relative flex h-[1080px] w-[1920px] flex-col overflow-hidden bg-[#08070c] font-['Open_Sans','Noto_Sans',sans-serif]">
      <div className="flex h-[1008px]">
        <Sidebar />
        <div className="flex min-w-0 grow flex-col">
          <TabStrip />
          <div className="h-[106px] bg-[#13111a]">
            <AddressBar />
            <Bookmarks />
          </div>
          <div className="flex h-[856px] pl-[2px]">
            <div className="flex min-w-0 grow flex-col"><Page /><DebugBar /></div>
            <ScrollBar />
          </div>
        </div>
      </div>
      <Taskbar />
      {/* neon outline around the active tab and the window body */}
      <svg width="1860" height="1008" viewBox="0 0 1860 1008" fill="none" className="pointer-events-none absolute left-[60px] top-0">
        <defs>
          <linearGradient id="edgeX" gradientUnits="userSpaceOnUse" x1="1300" x2="1555" y1="0" y2="0"><stop offset="0" stopColor="#fa1e4e" /><stop offset="1" stopColor="#fa1e4e" stopOpacity="0" /></linearGradient>
          <linearGradient id="edgeY" gradientUnits="userSpaceOnUse" x1="0" x2="0" y1="46" y2="1000"><stop offset="0" stopColor="#fa1e4e" /><stop offset=".5" stopColor="#a01638" /><stop offset="1" stopColor="#2a0812" /></linearGradient>
        </defs>
        <path d="M949.500 46V10L958 .5h286V46z" fill="#13111a" />
        <path d="M.5 46v962" stroke="url(#edgeY)" />
        <path d="M0 46.500h947.500l2-2V10l8.500-9.500h286v44l2 2H1300" stroke="#fa1e4e" />
        <path d="M1300 46.500h260v.01" stroke="url(#edgeX)" />
      </svg>
    </div>
  );
}
